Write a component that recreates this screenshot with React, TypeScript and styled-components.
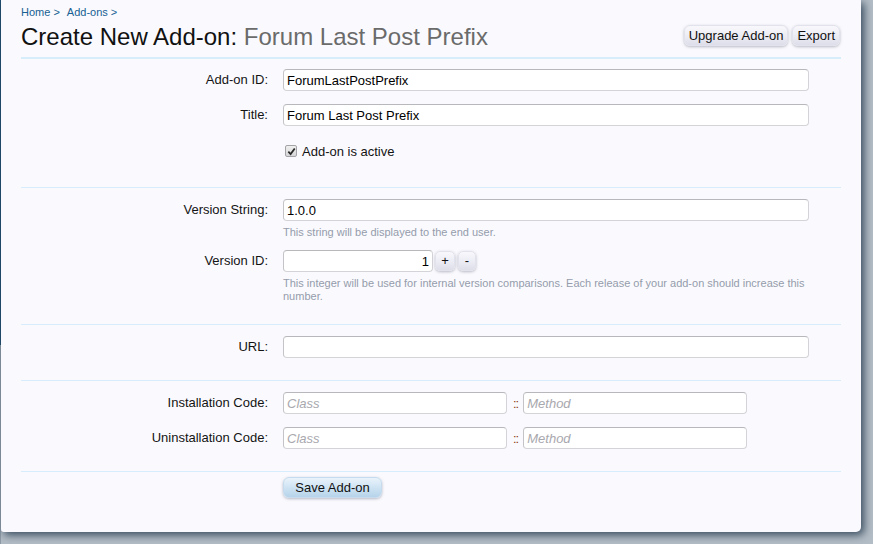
import styled, { createGlobalStyle } from 'styled-components';

const GlobalStyle = createGlobalStyle`
  html, body {
    margin: 0;
    padding: 0;
  }
  body {
    width: 873px;
    height: 544px;
    overflow: hidden;
    font-family: "Liberation Sans", Arial, sans-serif;
    background:
      linear-gradient(to bottom, #1f4c6d 0, #1f4c6d 345px, #8e9ba7 345px) left top / 1px 100% no-repeat,
      #b3bdc6;
  }
`;

const Panel = styled.div`
  margin-left: 1px;
  width: 860px;
  height: 532px;
  box-sizing: border-box;
  padding: 5px 20px 0 20px;
  background: #fafafe;
  border-radius: 0 0 5px 3px;
  box-shadow: 3px 3px 9px rgba(35, 55, 75, 0.85);
`;

const Breadcrumb = styled.div`
  display: flex;
  gap: 7px;
  font-size: 11px;
  line-height: 14px;
  color: #176093;
`;

const Crumb = styled.span``;

const TitleBar = styled.div`
  display: flex;
  align-items: flex-start;
  justify-content: space-between;
  padding: 3px 0 6px;
  border-bottom: 1px solid #d7edfc;
`;

const Heading = styled.h1`
  margin: 0;
  font-size: 24px;
  font-weight: normal;
  line-height: 29px;
  color: #111;

  span {
    color: #6b6b6b;
  }
`;

const TopButtons = styled.div`
  display: flex;
  gap: 4px;
  padding-top: 3px;
  margin-right: 1px;
`;

const Button = styled.button<{ $primary?: boolean }>`
  font-family: "Liberation Sans", Arial, sans-serif;
  font-size: 13px;
  line-height: 19px;
  height: 21px;
  padding: 0 4px;
  color: #111;
  border: 1px solid ${({ $primary }) => ($primary ? '#c6dcee' : '#e2e2ec')};
  border-radius: 6px;
  background: ${({ $primary }) =>
    $primary
      ? 'linear-gradient(to bottom, #e9f3fb 0%, #c9e0f1 60%, #b6d3ea 100%)'
      : 'linear-gradient(to bottom, #f8f8fc 0%, #eaeaf3 60%, #dedeea 100%)'};
  box-shadow: 0 1px 3px rgba(60, 60, 90, 0.35);
  cursor: pointer;
`;

const SmallButton = styled(Button)<{ $w?: number }>`
  height: 20px;
  width: ${({ $w }) => $w ?? 20}px;
  padding: 0;
  line-height: 18px;
  border-radius: 5px;
`;

const SaveButton = styled(Button)`
  width: 99px;
`;

const Section = styled.div<{ $top?: number; $bottom?: number; $gap?: number }>`
  display: flex;
  flex-direction: column;
  gap: ${({ $gap }) => $gap ?? 13}px;
  padding: ${({ $top }) => $top ?? 11}px 0 ${({ $bottom }) => $bottom ?? 22}px;
  border-top: 1px solid #d7edfc;

  &:first-of-type {
    border-top: none;
  }
`;

const Row = styled.div`
  display: grid;
  grid-template-columns: 247px 526px;
  column-gap: 15px;
  align-items: start;
`;

const Label = styled.label`
  text-align: right;
  font-size: 13px;
  line-height: 22px;
  color: #141414;
`;

const Control = styled.div`
  display: flex;
  flex-direction: column;
`;

const Inline = styled.div`
  display: flex;
  align-items: center;
`;

const TextInput = styled.input<{ $width?: number; $align?: string }>`
  box-sizing: border-box;
  width: ${({ $width }) => ($width ? `${$width}px` : '100%')};
  height: 22px;
  padding: 0 3px;
  font-family: "Liberation Sans", Arial, sans-serif;
  font-size: 13px;
  color: #000;
  text-align: ${({ $align }) => $align ?? 'left'};
  background: #fff;
  border: 1px solid #d4d4d8;
  border-top-color: #b8b8bc;
  border-left-color: #c4c4c8;
  border-radius: 4px;
  outline: none;

  &::placeholder {
    color: #a8a8ae;
    font-style: italic;
  }
`;

const Hint = styled.div`
  margin-top: 5px;
  font-size: 11px;
  line-height: 13px;
  color: #959cab;
`;

const CheckRow = styled.div`
  display: flex;
  align-items: center;
  gap: 5px;
  height: 24px;
  padding-left: 2px;
  font-size: 13px;
  color: #141414;
`;

const CheckBox = styled.span`
  display: inline-flex;
  align-items: center;
  justify-content: center;
  box-sizing: border-box;
  width: 12px;
  height: 12px;
  border: 1px solid #a3a3a8;
  border-radius: 2px;
  background: linear-gradient(to bottom, #f0f0f0, #d6d6d8);
`;

const Sep = styled.span`
  margin: 0 5px 0 6px;
  font-size: 13px;
  color: #8f3a14;
  letter-spacing: -1px;
`;

const StepButtons = styled.div`
  display: flex;
  gap: 3px;
  margin-left: 2px;
`;

export default function App() {
  return (
    <>
      <GlobalStyle />
      <Panel>
        <Breadcrumb>
          <Crumb>Home &gt;</Crumb>
          <Crumb>Add-ons &gt;</Crumb>
        </Breadcrumb>
        <TitleBar>
          <Heading>
            Create New Add-on: <span>Forum Last Post Prefix</span>
          </Heading>
          <TopButtons>
            <Button>Upgrade Add-on</Button>
            <Button>Export</Button>
          </TopButtons>
        </TitleBar>

        <Section $top={10} $bottom={24}>
          <Row>
            <Label>Add-on ID:</Label>
            <TextInput defaultValue="ForumLastPostPrefix" />
          </Row>
          <Row>
            <Label>Title:</Label>
            <TextInput defaultValue="Forum Last Post Prefix" />
          </Row>
          <Row>
            <span />
            <CheckRow>
              <CheckBox>
                <svg width="9" height="9" viewBox="0 0 10 10">
                  <path d="M1.5 5.2 L4 7.8 L8.6 1.6" fill="none" stroke="#2a2a2a" strokeWidth="2" />
                </svg>
              </CheckBox>
              Add-on is active
            </CheckRow>
          </Row>
        </Section>

        <Section $bottom={21} $gap={11}>
          <Row>
            <Label>Version String:</Label>
            <Control>
              <TextInput defaultValue="1.0.0" />
              <Hint>This string will be displayed to the end user.</Hint>
            </Control>
          </Row>
          <Row>
            <Label>Version ID:</Label>
            <Control>
              <Inline>
                <TextInput $width={150} $align="right" defaultValue="1" />
                <StepButtons>
                  <SmallButton $w={20}>+</SmallButton>
                  <SmallButton $w={18}>-</SmallButton>
                </StepButtons>
              </Inline>
              <Hint>
                This integer will be used for internal version comparisons. Each release of your add-on should
                increase this number.
              </Hint>
            </Control>
          </Row>
        </Section>

        <Section>
          <Row>
            <Label>URL:</Label>
            <TextInput defaultValue="" />
          </Row>
        </Section>

        <Section>
          <Row>
            <Label>Installation Code:</Label>
            <Inline>
              <TextInput $width={224} placeholder="Class" />
              <Sep>::</Sep>
              <TextInput $width={224} placeholder="Method" />
            </Inline>
          </Row>
          <Row>
            <Label>Uninstallation Code:</Label>
            <Inline>
              <TextInput $width={224} placeholder="Class" />
              <Sep>::</Sep>
              <TextInput $width={224} placeholder="Method" />
            </Inline>
          </Row>
        </Section>

        <Section $top={5} $bottom={0}>
          <Row>
            <span />
            <div>
              <SaveButton $primary>Save Add-on</SaveButton>
            </div>
          </Row>
        </Section>
      </Panel>
    </>
  );
}
